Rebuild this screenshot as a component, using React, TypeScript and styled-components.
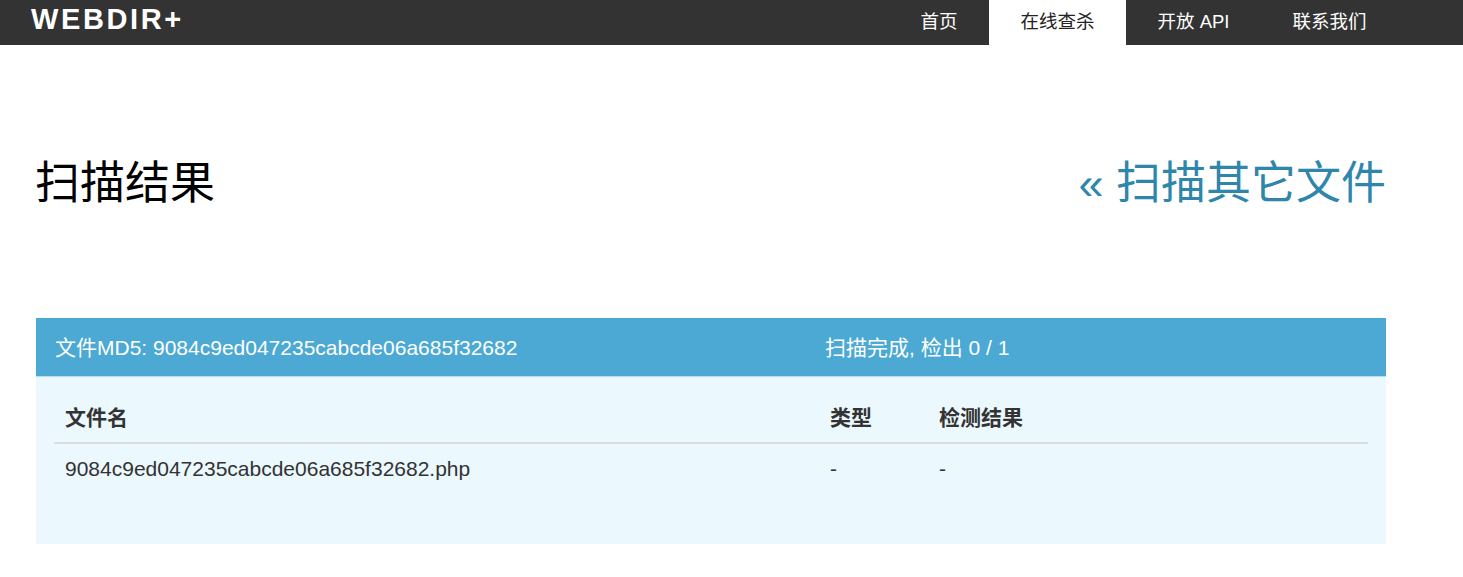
import React from "react";
import styled, { createGlobalStyle } from "styled-components";

const GlobalStyle = createGlobalStyle`
  html, body { margin: 0; padding: 0; background: #fff; }
  body {
    font-family: "Liberation Sans", Arial, "Noto Sans CJK SC", sans-serif;
    color: #333;
  }
`;

const NavBar = styled.header`
  height: 45px;
  background: #333;
  display: flex;
  align-items: stretch;
  justify-content: space-between;
  padding: 0 65px 0 31px;
`;

const Logo = styled.a`
  color: #fff;
  font-family: "Liberation Sans", Arial, sans-serif;
  font-weight: bold;
  font-size: 29px;
  letter-spacing: 2.6px;
  line-height: 39px;
  text-decoration: none;
`;

const NavList = styled.nav`
  display: flex;
  align-items: stretch;
`;

const NavItem = styled.a<{ $active?: boolean }>`
  display: flex;
  align-items: center;
  padding: 0 31.5px 5px;
  font-size: 18.5px;
  color: ${(p) => (p.$active ? "#222" : "#fff")};
  background: ${(p) => (p.$active ? "#fff" : "transparent")};
  text-decoration: none;
`;

const Container = styled.main`
  width: 1350px;
  margin-left: 36px;
`;

const TitleRow = styled.div`
  display: flex;
  justify-content: space-between;
  align-items: baseline;
  padding-top: 107px;
  height: 165px;
  box-sizing: border-box;
`;

const Title = styled.h1`
  margin: 0 0 0 -1px;
  font-size: 45px;
  font-weight: normal;
  color: #000;
  line-height: 1.4;
`;

const BackLink = styled.a`
  font-size: 45px;
  color: #2f86ab;
  text-decoration: none;
  line-height: 1.4;
`;

const Panel = styled.section`
  margin-top: 108px;
`;

const PanelHeader = styled.div`
  height: 59px;
  background: #4ba9d4;
  border-bottom: 1px solid #b5def1;
  color: #fff;
  font-size: 21px;
  display: grid;
  grid-template-columns: 770px 1fr;
  align-items: center;
  padding: 0 19px;
  padding-bottom: 2px;
  box-sizing: border-box;
`;

const PanelBody = styled.div`
  background: #ebf8fe;
  padding: 17px 18px 50px;
`;

const Table = styled.table`
  width: 100%;
  table-layout: fixed;
  border-collapse: collapse;
  font-size: 21px;
  color: #333;
`;

const HeadCell = styled.th<{ $w?: number }>`
  text-align: left;
  font-weight: bold;
  padding: 9px 10px 9px 11px;
  line-height: 30px;
  border-bottom: 2px solid #dcdcdc;
  width: ${(p) => (p.$w ? `${p.$w}px` : "auto")};
`;

const Cell = styled.td`
  padding: 10px 10px 10px 11px;
  line-height: 30px;
`;

export default function App() {
  return (
    <>
      <GlobalStyle />
      <NavBar>
        <Logo href="#">WEBDIR+</Logo>
        <NavList>
          <NavItem href="#">首页</NavItem>
          <NavItem href="#" $active>在线查杀</NavItem>
          <NavItem href="#">开放 API</NavItem>
          <NavItem href="#">联系我们</NavItem>
        </NavList>
      </NavBar>
      <Container>
        <TitleRow>
          <Title>扫描结果</Title>
          <BackLink href="#">« 扫描其它文件</BackLink>
        </TitleRow>
        <Panel>
          <PanelHeader>
            <span>文件MD5: 9084c9ed047235cabcde06a685f32682</span>
            <span>扫描完成, 检出 0 / 1</span>
          </PanelHeader>
          <PanelBody>
            <Table>
              <thead>
                <tr>
                  <HeadCell $w={744}>文件名</HeadCell>
                  <HeadCell $w={88}>类型</HeadCell>
                  <HeadCell>检测结果</HeadCell>
                </tr>
              </thead>
              <tbody>
                <tr>
                  <Cell>9084c9ed047235cabcde06a685f32682.php</Cell>
                  <Cell>-</Cell>
                  <Cell>-</Cell>
                </tr>
              </tbody>
            </Table>
          </PanelBody>
        </Panel>
      </Container>
    </>
  );
}
